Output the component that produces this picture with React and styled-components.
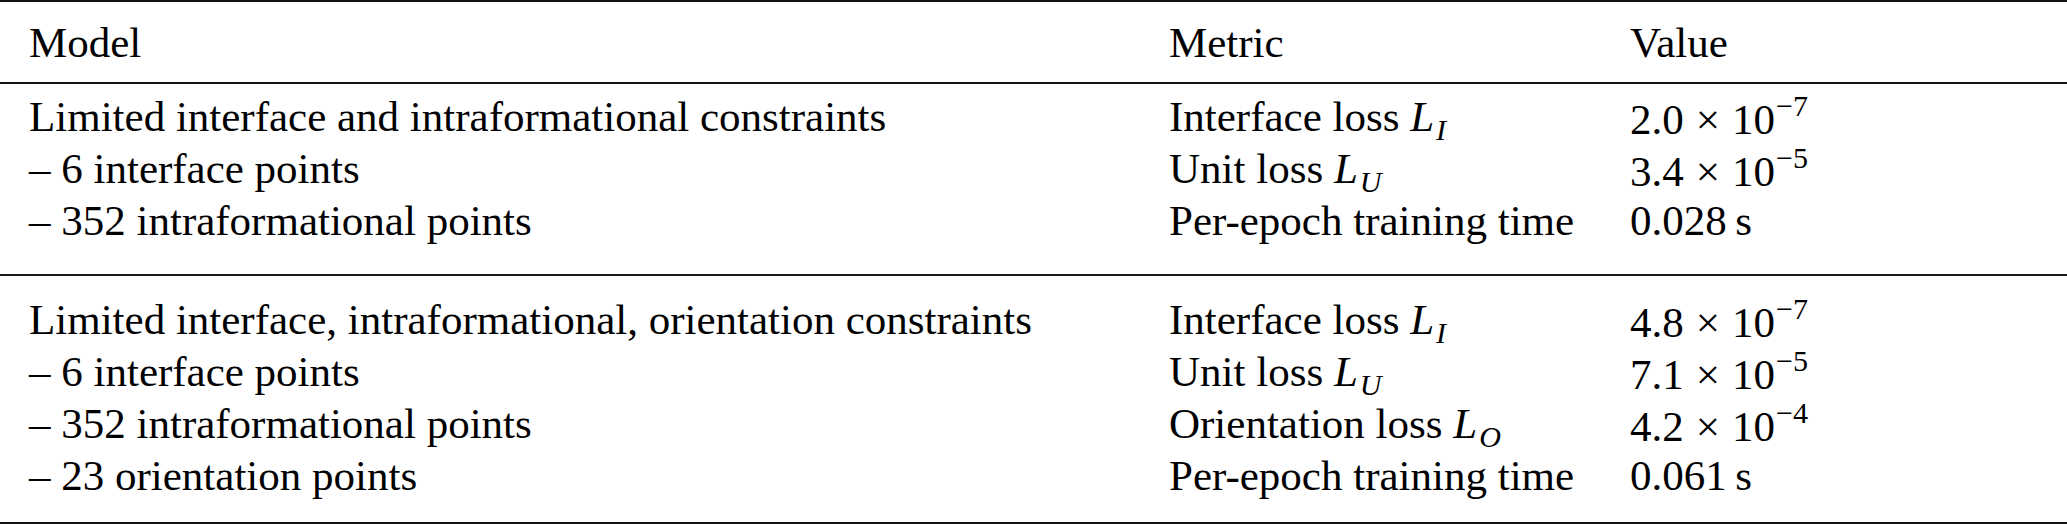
import React from "react";
import styled, { createGlobalStyle } from "styled-components";

const GlobalStyle = createGlobalStyle`
  html, body {
    margin: 0;
    padding: 0;
    background: #fff;
  }
  body {
    font-family: "Liberation Serif", "Times New Roman", serif;
    color: #000;
  }
`;

const sections = [
  {
    padTop: 7,
    padBottom: 27,
    model: [
      "Limited interface and intraformational constraints",
      "– 6 interface points",
      "– 352 intraformational points",
    ],
    metrics: [
      { name: "Interface loss", sym: "L", sub: "I", mant: "2.0", exp: "−7" },
      { name: "Unit loss", sym: "L", sub: "U", mant: "3.4", exp: "−5" },
      { name: "Per-epoch training time", plain: "0.028\u2009s" },
    ],
  },
  {
    padTop: 18,
    padBottom: 20,
    model: [
      "Limited interface, intraformational, orientation constraints",
      "– 6 interface points",
      "– 352 intraformational points",
      "– 23 orientation points",
    ],
    metrics: [
      { name: "Interface loss", sym: "L", sub: "I", mant: "4.8", exp: "−7" },
      { name: "Unit loss", sym: "L", sub: "U", mant: "7.1", exp: "−5" },
      { name: "Orientation loss", sym: "L", sub: "O", mant: "4.2", exp: "−4" },
      { name: "Per-epoch training time", plain: "0.061\u2009s" },
    ],
  },
];

const App = () => {
  return (
    <>
      <GlobalStyle />
      <Table>
        <Header>
          <Cell>Model</Cell>
          <Cell>Metric</Cell>
          <Cell>Value</Cell>
        </Header>
        {sections.map((sec, i) => (
          <Section
            key={i}
            padTop={sec.padTop}
            padBottom={sec.padBottom}
            ruled={i < sections.length - 1}
          >
            <Cell>
              {sec.model.map((t, j) => (
                <Line key={j}>{t}</Line>
              ))}
            </Cell>
            <Cell>
              {sec.metrics.map((m, j) => (
                <Line key={j}>
                  {m.name}
                  {m.sym ? (
                    <>
                      {" "}
                      <Sym>{m.sym}</Sym>
                      <Sub>{m.sub}</Sub>
                    </>
                  ) : null}
                </Line>
              ))}
            </Cell>
            <Cell>
              {sec.metrics.map((m, j) => (
                <Line key={j}>
                  {m.plain ? (
                    m.plain
                  ) : (
                    <>
                      {m.mant}
                      <Times>×</Times>10<Sup>{m.exp}</Sup>
                    </>
                  )}
                </Line>
              ))}
            </Cell>
          </Section>
        ))}
      </Table>
    </>
  );
};

export default App;

// styles
const Table = styled.div`
  width: 2067px;
  height: 524px;
  box-sizing: border-box;
  border-top: 2px solid #111;
  border-bottom: 2px solid #111;
  font-size: 43px;
`;
const Row = styled.div`
  display: grid;
  grid-template-columns: 1140px 461px 1fr;
  padding-left: 29px;
`;
const Header = styled(Row)`
  height: 80px;
  align-items: center;
  border-bottom: 2px solid #111;
`;
const Section = styled(Row)`
  padding-top: ${(props) => props.padTop}px;
  padding-bottom: ${(props) => props.padBottom}px;
  border-bottom: ${(props) => (props.ruled ? "2px solid #1a1a1a" : "none")};
`;
const Cell = styled.div`
  display: flex;
  flex-direction: column;
  white-space: nowrap;
`;
const Line = styled.div`
  height: 52px;
  line-height: 52px;
`;
const Sym = styled.i`
  font-style: italic;
`;
const Sub = styled.i`
  font-size: 0.7em;
  line-height: 1;
  vertical-align: -0.3em;
  margin-left: 2px;
`;
const Sup = styled.span`
  font-size: 0.7em;
  line-height: 1;
  vertical-align: 0.6em;
  margin-left: 1px;
`;
const Times = styled.span`
  margin: 0 0.28em;
`;
